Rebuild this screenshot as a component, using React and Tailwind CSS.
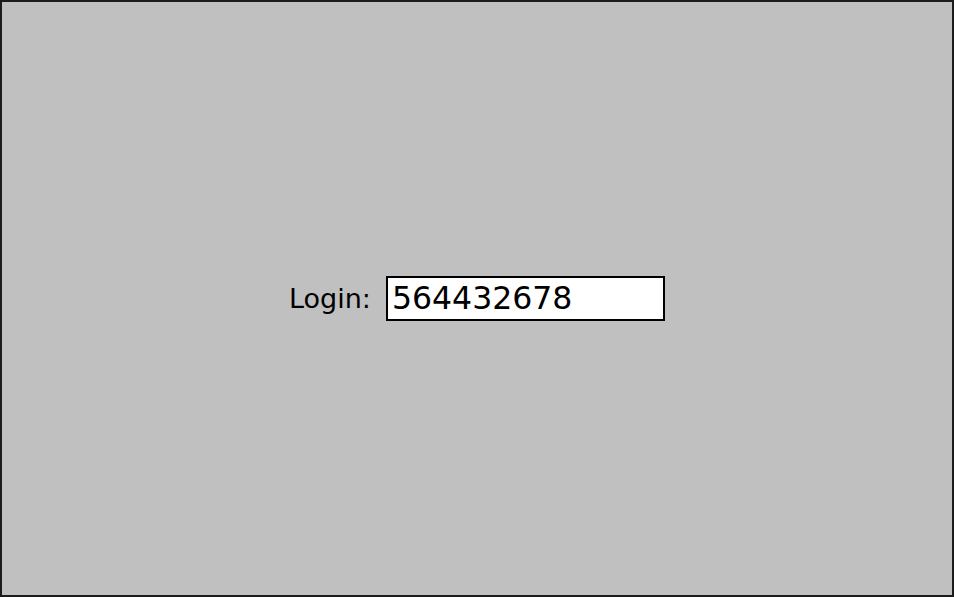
export default function App() {
  return (
    <div className="w-[954px] h-[597px] bg-[#c0c0c0] border-2 border-[#1c1c1c] flex items-center justify-center" style={{ fontFamily: '"DejaVu Sans", sans-serif' }}>
      <div className="flex items-center gap-[15px]">
        <span className="text-[27px] leading-none text-black">Login:</span>
        <div className="w-[279px] h-[45px] bg-white border-2 border-black flex items-center pl-[4px]">
          <span className="text-[31.5px] leading-none text-black">564432678</span>
        </div>
      </div>
    </div>
  );
}
